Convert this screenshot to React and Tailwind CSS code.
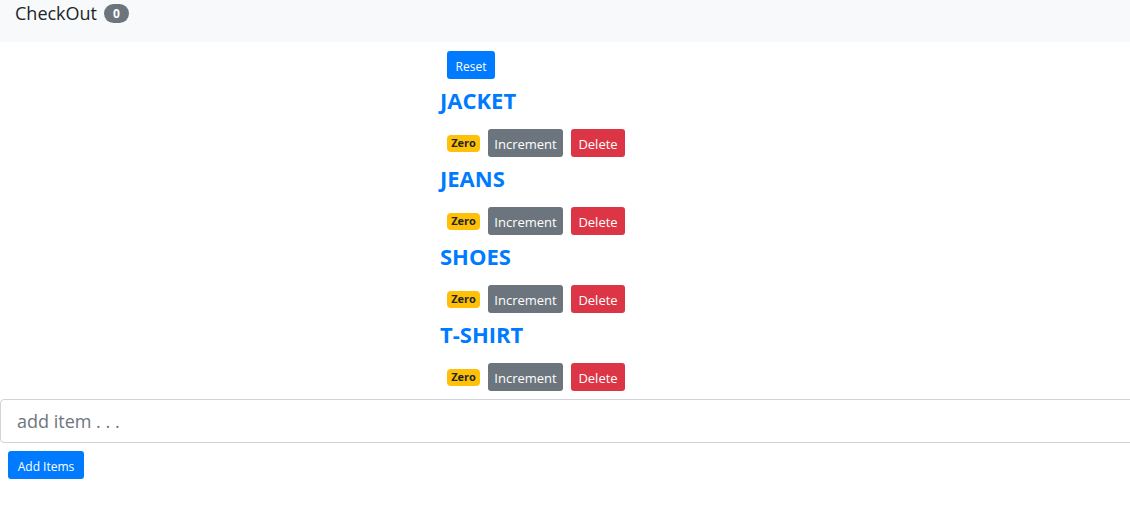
import React, { useState } from "react";

const items = ["JACKET", "JEANS", "SHOES", "T-SHIRT"];

const Item = ({ name }) => (
  <div>
    <h4 className="mb-[7px] h-[27px] text-[22px] font-bold leading-[27px] text-[#007bff]">
      {name}
    </h4>
    <div className="flex items-center gap-2 py-2 pl-[7px]">
      <span className="flex h-[17px] w-[33px] items-center justify-center rounded-[4px] bg-[#ffc107] pt-[1px] text-[11px] font-bold text-[#212529]">
        Zero
      </span>
      <button className="flex h-[28px] w-[75px] items-center justify-center rounded-[3px] bg-[#6c757d] pt-[3px] text-[13px] text-white">
        Increment
      </button>
      <button className="flex h-[28px] w-[54px] items-center justify-center rounded-[3px] bg-[#dc3545] pt-[3px] text-[13px] text-white">
        Delete
      </button>
    </div>
  </div>
);

const App = () => {
  const [text, setText] = useState("");

  return (
    <div className="min-h-screen w-full overflow-hidden bg-white font-['Open_Sans',sans-serif] text-[#212529]">
      <nav className="flex h-[42px] items-start bg-[#f8f9fa] pl-[15px] pt-[1px]">
        <div className="flex items-center gap-[7px]">
          <span className="text-[18px] leading-[24px]">CheckOut</span>
          <span className="flex h-[19px] w-[25px] items-center justify-center rounded-full bg-[#6c757d] pt-[1px] text-[12px] font-bold text-white">
            0
          </span>
        </div>
      </nav>

      <main className="pl-[440px]">
        <div className="pb-[8px] pl-[7px] pt-[9px]">
          <button className="flex h-[28px] w-[48px] items-center justify-center rounded-[3px] bg-[#007bff] pt-[3px] text-[12px] text-white">
            Reset
          </button>
        </div>
        {items.map((name) => (
          <Item key={name} name={name} />
        ))}
      </main>

      <input
        className="block h-[44px] w-[1140px] rounded-[4px] border border-[#ced4da] px-4 text-[18px] text-[#495057] outline-none placeholder:text-[#6c757d]"
        placeholder="add item . . ."
        value={text}
        onChange={(e) => setText(e.target.value)}
      />
      <div className="pl-2 pt-2">
        <button className="flex h-[28px] w-[76px] items-center justify-center rounded-[3px] bg-[#007bff] pt-[3px] text-[12px] text-white">
          Add Items
        </button>
      </div>
    </div>
  );
};

export default App;
